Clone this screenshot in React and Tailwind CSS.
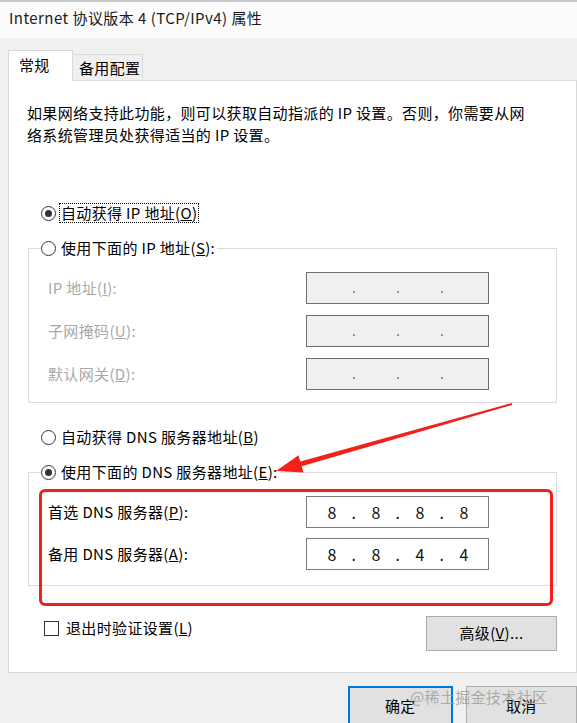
const font = { fontFamily: '"Noto Sans CJK SC", "Noto Sans", sans-serif' };

function Radio({ checked, children, focus }) {
  return (
    <span className="flex w-fit items-center h-[22px] bg-white pr-[2px] leading-[22px]">
      <span className="flex h-[15px] w-[15px] shrink-0 items-center justify-center rounded-full border border-[#333] bg-white">
        {checked ? <span className="h-[7px] w-[7px] rounded-full bg-[#333]" /> : null}
      </span>
      <span className={focus ? 'ml-[4px] px-[1px] leading-[18px] outline outline-1 outline-dotted outline-black' : 'ml-[5px]'}>{children}</span>
    </span>
  );
}

function IpBox({ values, disabled }) {
  const segs = values || ['', '', '', ''];
  return (
    <div className={`flex h-[32px] w-[183px] items-center pl-[14px] border ${disabled ? 'border-[#6e6e6e] bg-[#f0f0f0] text-[#888]' : 'border-[#7a7a7a] bg-white text-[#111]'}`}>
      {segs.map((s, i) => (
        <div key={i} className="flex">
          <span className="w-[22px] text-center text-[16px]">{s}</span>
          {i < 3 ? <span className={`w-[22px] text-center ${disabled ? 'text-[#555] text-[12px]' : 'text-[16px]'}`}>.</span> : null}
        </div>
      ))}
    </div>
  );
}

function Row({ label, children, gray }) {
  return (
    <div className="flex items-center h-[32px]">
      <div className={`w-[277px] pl-[19px] ${gray ? 'text-[#a8a8a8]' : 'text-black'}`}>{label}</div>
      {children}
    </div>
  );
}

export default function App() {
  return (
    <div style={font} className="relative h-[723px] w-[577px] overflow-hidden bg-[#f0f0f0] text-[15px] tracking-[0.35px] text-black">
      <div className="h-[38px] border-t-2 border-[#c8c8c8] bg-[#fbfbfb] pl-[9px] pt-[5px] leading-[22px] text-[15px] tracking-[0.45px] text-[#1a1a1a]">
        Internet 协议版本 4 (TCP/IPv4) 属性
      </div>

      <div className="flex items-end pl-[8px] pt-[12px]">
        <div className="relative z-10 -mb-px h-[31px] w-[65px] border border-b-0 border-[#d9d9d9] bg-white pl-[10px] pt-[3px] leading-[22px]">常规</div>
        <div className="h-[26px] w-[70px] border border-b-0 border-l-0 border-[#d9d9d9] bg-[#f0f0f0] pl-[6px] leading-[26px]">备用配置</div>
      </div>

      <div className="ml-[8px] h-[593px] w-[569px] border border-[#d9d9d9] bg-white">
        <p className="pl-[18px] pt-[21px] leading-[22px]">
          如果网络支持此功能，则可以获取自动指派的 IP 设置。否则，你需要从网<br />
          络系统管理员处获得适当的 IP 设置。
        </p>

        <div className="ml-[32px] mt-[56px] h-[22px]">
          <Radio checked focus>自动获得 IP 地址(<u>O</u>)</Radio>
        </div>

        <fieldset className="ml-[19px] mt-[13px] w-[529px] border border-[#dcdcdc] pb-[12px]">
          <legend className="ml-[12px] h-[22px]">
            <Radio>使用下面的 IP 地址(<u>S</u>):</Radio>
          </legend>
          <div className="flex flex-col gap-[11px] pt-[13px]">
            <Row label={<>IP 地址(<u>I</u>):</>} gray><IpBox disabled /></Row>
            <Row label={<>子网掩码(<u>U</u>):</>} gray><IpBox disabled /></Row>
            <Row label={<>默认网关(<u>D</u>):</>} gray><IpBox disabled /></Row>
          </div>
        </fieldset>

        <div className="ml-[32px] mt-[23px] h-[22px]">
          <Radio>自动获得 DNS 服务器地址(<u>B</u>)</Radio>
        </div>

        <fieldset className="ml-[19px] mt-[13px] w-[529px] border border-[#dcdcdc] pb-[15px]">
          <legend className="ml-[12px] h-[22px]">
            <Radio checked>使用下面的 DNS 服务器地址(<u>E</u>):</Radio>
          </legend>
          <div className="flex flex-col gap-[10px] pt-[13px]">
            <Row label={<>首选 DNS 服务器(<u>P</u>):</>}><IpBox values={['8', '8', '8', '8']} /></Row>
            <Row label={<>备用 DNS 服务器(<u>A</u>):</>}><IpBox values={['8', '8', '4', '4']} /></Row>
          </div>
        </fieldset>

        <div className="ml-[35px] mt-[30px] flex w-[513px] items-start justify-between">
          <label className="mt-[1px] flex h-[22px] items-center">
            <span className="h-[15px] w-[15px] border border-[#333] bg-white" />
            <span className="ml-[7px]">退出时验证设置(<u>L</u>)</span>
          </label>
          <button className="h-[35px] w-[131px] border border-[#adadad] bg-[#e1e1e1]">高级(<u>V</u>)...</button>
        </div>
      </div>

      <div className="flex gap-[13px] pl-[348px] pt-[13px]">
        <button className="h-[40px] w-[108px] border-2 border-[#0078d7] bg-[#e1e1e1]">确定</button>
        <button className="h-[40px] w-[115px] border border-[#adadad] bg-[#e1e1e1]">取消</button>
      </div>

      {/* annotation overlays */}
      <div className="pointer-events-none absolute left-[39px] top-[489px] h-[117px] w-[514px] rounded-[6px] border-[3px] border-[#f0201a]" />
      <svg className="pointer-events-none absolute left-0 top-0" width="577" height="723">
        <polygon
          fill="#f0221a"
          points="276,471 303.5,472.6 301.7,466.3 512.2,404.9 511.8,403.1 300.3,461.5 298.5,455.2"
        />
      </svg>
      <div className="pointer-events-none absolute left-[410px] top-[686px] text-[15px] leading-[22px] text-[#9a9a9a]/80">@稀土掘金技术社区</div>
    </div>
  );
}
